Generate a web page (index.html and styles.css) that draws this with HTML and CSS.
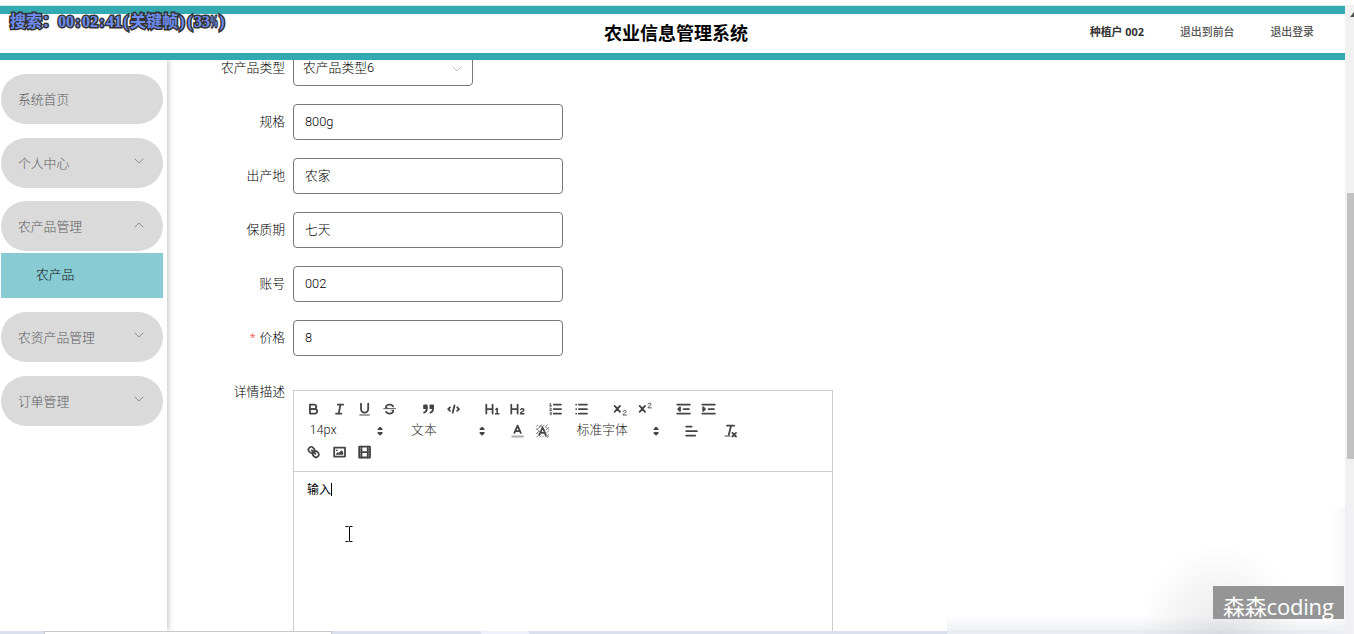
FILE: index.html
```html
<!DOCTYPE html>
<html lang="zh-CN">
<head>
<meta charset="utf-8">
<title>农业信息管理系统</title>
<link rel="stylesheet" href="styles.css">
</head>
<body>
<div class="screen">
  <div class="window">
    <div class="page">
      <header class="header">
        <h1 class="title">农业信息管理系统</h1>
        <nav class="user-nav"><b class="user">种植户 002</b><a>退出到前台</a><a>退出登录</a></nav>
      </header>
      <div class="body">
        <aside class="sidebar">
          <div class="menu-item">系统首页</div>
          <div class="menu-item">个人中心<svg class="chev" viewBox="0 0 10 6"><path d="M.7.7 5 5 9.300.7"/></svg></div>
          <div class="menu-item open">农产品管理<svg class="chev" viewBox="0 0 10 6"><path d="M.7 5.300 5 1 9.300 5.300"/></svg></div>
          <div class="submenu">农产品</div>
          <div class="menu-item">农资产品管理<svg class="chev" viewBox="0 0 10 6"><path d="M.7.7 5 5 9.300.7"/></svg></div>
          <div class="menu-item">订单管理<svg class="chev" viewBox="0 0 10 6"><path d="M.7.7 5 5 9.300.7"/></svg></div>
        </aside>
        <main class="form">
          <div class="row"><label>农产品类型</label><div class="field select">农产品类型6<svg class="chev light" viewBox="0 0 10 6"><path d="M.7.7 5 5 9.300.7"/></svg></div></div>
          <div class="row"><label>规格</label><div class="field">800g</div></div>
          <div class="row"><label>出产地</label><div class="field">农家</div></div>
          <div class="row"><label>保质期</label><div class="field">七天</div></div>
          <div class="row"><label>账号</label><div class="field">002</div></div>
          <div class="row"><label><span class="req">*</span>价格</label><div class="field">8</div></div>
          <div class="row tall"><label>详情描述</label>
            <div class="editor">
              <div class="toolbar">
                <div class="tools">
                  <div class="group">
                    <svg class="ic" viewBox="0 0 18 18"><path class="s" d="M5,4H9.500A2.500,2.500,0,0,1,12,6.500v0A2.500,2.500,0,0,1,9.500,9H5A0,0,0,0,1,5,9V4A0,0,0,0,1,5,4Z"/><path class="s" d="M5,9h5.500A2.500,2.500,0,0,1,13,11.500v0A2.500,2.500,0,0,1,10.500,14H5a0,0,0,0,1,0,0V9A0,0,0,0,1,5,9Z"/></svg>
                    <svg class="ic" viewBox="0 0 18 18"><path class="s" d="M7 4h6M5 14h6M8 14l2-10"/></svg>
                    <svg class="ic" viewBox="0 0 18 18"><path class="s" d="M5,3V9a4.012,4.012,0,0,0,4,4H9a4.012,4.012,0,0,0,4-4V3"/><rect class="f" x="3" y="15" width="12" height="1" rx=".5"/></svg>
                    <svg class="ic" viewBox="0 0 18 18"><path class="s t" d="M15.500 8.500h-13"/><path class="f" d="M9.007,8C6.542,7.791,6,7.519,6,6.500,6,5.792,7.283,5,9,5c1.571,0,2.765.679,2.969,1.309a1,1,0,0,0,1.900-.617C13.356,4.106,11.354,3,9,3,6.200,3,4,4.538,4,6.500a3.200,3.200,0,0,0,.5,1.843Z"/><path class="f" d="M8.984,10C11.457,10.208,12,10.479,12,11.500c0,.708-1.283,1.500-3,1.500-1.571,0-2.765-.679-2.969-1.309a1,1,0,1,0-1.900.617C4.644,13.894,6.646,15,9,15c2.800,0,5-1.538,5-3.500a3.200,3.200,0,0,0-.5-1.843Z"/></svg>
                  </div>
                  <div class="group">
                    <svg class="ic" viewBox="0 0 18 18"><rect class="f s" x="4" y="5" width="3" height="3"/><rect class="f s" x="11" y="5" width="3" height="3"/><path class="f s" d="M7,8c0,4.031-3,5-3,5M14,8c0,4.031-3,5-3,5"/></svg>
                    <svg class="ic" viewBox="0 0 18 18"><path class="s" d="M5 7 3 9l2 2M13 7l2 2-2 2M10 5l-2 8"/></svg>
                  </div>
                  <div class="group">
                    <svg class="ic" viewBox="0 0 18 18"><path class="f" d="M10,4V14a1,1,0,0,1-2,0V10H3v4a1,1,0,0,1-2,0V4A1,1,0,0,1,3,4V8H8V4a1,1,0,0,1,2,0Zm6.068,9.209H14.981V8.244a.6.6,0,0,0-.605-.607h-.627a1.089,1.089,0,0,0-.671.271l-1.066.874a.591.591,0,0,0-.086.860l.314.380a.594.594,0,0,0,.854.060l.184-.13v3.262H12.194a.594.594,0,0,0-.605.606v.508a.6.6,0,0,0,.605.606h3.875a.6.6,0,0,0,.605-.606v-.508A.600.600,0,0,0,16.068,13.209Z"/></svg>
                    <svg class="ic" viewBox="0 0 18 18"><path class="f" d="M16.740,13.819v.521a.583.583,0,0,1-.595.600h-3.967a.606.606,0,0,1-.638-.605v-.316c0-2.061,3.569-2.700,3.569-3.932a.739.739,0,0,0-.813-.683,1.124,1.124,0,0,0-.955.585.566.566,0,0,1-.851.219l-.443-.310a.570.570,0,0,1-.186-.849,2.870,2.870,0,0,1,2.512-1.214c1.240,0,2.300.800,2.300,2.107,0,1.914-2.722,2.500-3.065,3.263h2.536A.589.589,0,0,1,16.740,13.819ZM9,3A1,1,0,0,0,8,4V8H3V4A1,1,0,0,0,1,4V14a1,1,0,0,0,2,0V10H8v4a1,1,0,0,0,2,0V4A1,1,0,0,0,9,3Z"/></svg>
                  </div>
                  <div class="group">
                    <svg class="ic" viewBox="0 0 18 18"><path class="s" d="M7 4h8M7 9h8M7 14h8"/><path class="s t" d="M2.500 5.500h2M3.500 5.500V2.700l-1 .5M4.500 10.500h-2c0-.9 1.900-1 1.900-1.900 0-1.100-1.600-1-1.900-.3M2.500 14.800c.3.900 2 .8 2-.2 0-.6-.4-.8-1-.8.6 0 .9-.3.9-.7 0-.8-1.500-.9-1.900-.2"/></svg>
                    <svg class="ic" viewBox="0 0 18 18"><path class="s" d="M6 4h9M6 9h9M6 14h9M3 4h0M3 9h0M3 14h0"/></svg>
                  </div>
                  <div class="group">
                    <svg class="ic" viewBox="0 0 18 18"><path class="s" d="M3.500 5.500l6 6.500M9.500 5.500l-6 6.500"/><path class="s t" d="M12.800 11.600c.2-1.700 3.400-1.700 3.400.1 0 1.400-3.400 2-3.400 3.900H16.500"/></svg>
                    <svg class="ic" viewBox="0 0 18 18"><path class="s" d="M3.500 5.500l6 6.500M9.500 5.500l-6 6.500"/><path class="s t" d="M12.800 3.600c.2-1.700 3.400-1.700 3.400.1 0 1.400-3.400 2-3.400 3.900H16.500"/></svg>
                  </div>
                  <div class="group">
                    <svg class="ic" viewBox="0 0 18 18"><path class="s" d="M2 14h14M2 4h14M9 9h6"/><path class="s f" d="M5 7v4L3 9z"/></svg>
                    <svg class="ic" viewBox="0 0 18 18"><path class="s" d="M2 14h14M2 4h14M9 9h6"/><path class="s f" d="M3 7v4l2-2z"/></svg>
                  </div>
                </div>
                <div class="tools">
                  <div class="picker">14px<svg class="updown" viewBox="0 0 18 18"><path class="s f" d="M7 11l2 2 2-2zM7 7l2-2 2 2z"/></svg></div>
                  <div class="picker">文本<svg class="updown" viewBox="0 0 18 18"><path class="s f" d="M7 11l2 2 2-2zM7 7l2-2 2 2z"/></svg></div>
                  <div class="group">
                    <svg class="ic" viewBox="0 0 18 18"><path class="s faint" d="M3 15h12"/><path class="s" d="M5.500 11 9 3l3.500 8M11.630 9H6.380"/></svg>
                    <svg class="ic" viewBox="0 0 18 18"><path class="hatch" d="M2 4l2-2M2 8l6-6M2 12 5 9M2 16l3-3M5 5l3-3M9 4l2-2M11.500 5l3-3M12.500 8l3.500-3.500M13.500 11 16 8.500M14 14.500l2-2M5.500 16 7.500 14M8.500 16l2-2M11.500 16l2-2M14.500 16l1.500-1.500M12.500 4 16 7.500M2 6l4 4M3 11l3 3M6 3l3 2M11 13l4 3"/><path class="s" d="M5.500 13 9 5l3.500 8M11.630 11H6.380"/></svg>
                  </div>
                  <div class="picker wide">标准字体<svg class="updown" viewBox="0 0 18 18"><path class="s f" d="M7 11l2 2 2-2zM7 7l2-2 2 2z"/></svg></div>
                  <div class="group"><svg class="ic" viewBox="0 0 18 18"><path class="s" d="M3 9h12M3 14h10M3 4h6"/></svg></div>
                  <div class="group"><svg class="ic" viewBox="0 0 18 18"><path class="s" d="M5 3h8M9.500 3 7 13M11 11l4 4M15 11l-4 4"/><rect class="f" x="2" y="14" width="7" height="1" rx=".5"/></svg></div>
                </div>
                <div class="tools">
                  <div class="group">
                    <svg class="ic" viewBox="0 0 18 18"><path class="s" d="M7 7l4 4M8.900,4.577a3.476,3.476,0,0,1,.360,4.679A3.476,3.476,0,0,1,4.577,8.900C3.185,7.500,2.035,6.400,4.217,4.217S7.500,3.185,8.900,4.577ZM13.423,9.100a3.476,3.476,0,0,0-4.679-.360,3.476,3.476,0,0,0,.360,4.679c1.392,1.392,2.500,2.542,4.679.360S14.815,10.500,13.423,9.100Z"/></svg>
                    <svg class="ic" viewBox="0 0 18 18"><rect class="s" x="3" y="4" width="12" height="10"/><circle class="f" cx="6" cy="7" r="1"/><path class="f" d="M5 12v-1l2-2 1 1 3-3 2 2v3z"/></svg>
                    <svg class="ic" viewBox="0 0 18 18"><rect class="s" x="3" y="3" width="12" height="12"/><path class="s" d="M5.500 3v12M12.500 3v12M5 9h8"/><path class="s t" d="M3 6h2M3 9h2M3 12h2M13 6h2M13 9h2M13 12h2"/></svg>
                  </div>
                </div>
              </div>
              <div class="content">输入<span class="caret"></span></div>
            </div>
          </div>
        </main>
      </div>
    </div>
    <div class="scrollbar"><i class="up"></i><i class="thumb"></i></div>
  </div>
  <footer class="taskbar"><i class="tab"></i><i class="tab2"></i></footer>
  <div class="fog"></div>
  <div class="glow"></div>
  <div class="edge"></div>
  <div class="watermark">森森coding</div>
  <svg class="cursor" viewBox="0 0 8 16"><path d="M.5 .5h3M4.500 .5h3M4.500 1v14M.5 15.500h3M4.500 15.500h3"/></svg>
  <div class="osd">搜索：00<i>:</i>02<i>:</i>41<i>(</i>关键帧<i>)</i><i>(</i>33<i class="pct">%</i><i>)</i></div>
</div>
</body>
</html>
```
FILE: styles.css
```css
* { box-sizing: border-box; }
body { margin: 0; background: #fff; font-family: Roboto, "Noto Sans CJK SC", sans-serif; font-size: 12.8px; color: #202124; }
svg { display: block; fill: none; }
.screen { position: relative; width: 1354px; height: 634px; overflow: hidden; display: flex; flex-direction: column; }
.window { height: 631px; display: flex; padding-top: 5px; }
.page { width: 1345px; display: flex; flex-direction: column; border-top: 1px solid #d9eeee; }
.header { flex: none; height: 54px; border-top: 8px solid #33a9b1; border-bottom: 7px solid #33a9b1; display: grid; grid-template-columns: 1fr auto 1fr; align-items: center; padding: 0 31px 0 38px; }
.title { grid-column: 2; margin: 0; font-size: 18px; line-height: 36px; color: #000; font-weight: 700; }
.user-nav { display: flex; justify-content: flex-end; gap: 36px; font: 10.9px/36px "Open Sans", "Noto Sans CJK SC", sans-serif; color: #555; font-weight: 500; padding-bottom: 3px; }
.user { color: #333; }
.body { flex: 1; min-height: 0; display: flex; overflow: hidden; }
.sidebar { flex: none; width: 167px; padding: 14px 4px 0 1px; box-shadow: 1px 0 6px rgba(0,0,0,.26); color: #5c5c60; font-weight: 300; }
.menu-item { height: 50px; margin-bottom: 13.7px; border-radius: 25px; background: #dadada; padding: 0 19px 1px 17px; display: flex; align-items: center; justify-content: space-between; }
.menu-item.open { margin-bottom: 1.500px; }
.submenu { height: 45px; margin-bottom: 14px; background: #88cbd2; color: #0c1214; line-height: 44px; padding-left: 35px; }
.chev { width: 10px; height: 6px; stroke: #88888c; stroke-width: .9; margin-top: -2px; }
.chev.light { stroke: #b4b8c0; margin: 2px 0 0; }
.form { padding-left: 26px; margin-top: -10px; }
.row { display: flex; margin-bottom: 18px; }
.row label { width: 92px; text-align: right; line-height: 36px; font-weight: 300; color: #000; }
.req { color: #f04848; margin-right: 4px; }
.field { width: 270px; height: 36px; margin-left: 8px; border: 1px solid #77787c; border-radius: 4px; padding: 0 11px; line-height: 34px; font-weight: 300; color: #000; }
.select { width: 180px; padding: 0 10px 0 9px; display: flex; justify-content: space-between; align-items: center; }
.tall { padding-top: 16px; }
.tall label { margin-top: -16px; }
.editor { width: 540px; height: 300px; margin-left: 8px; border: 1px solid #ccc; }
.toolbar { height: 81px; padding: 7.500px 7.400px; border-bottom: 1px solid #ccc; color: #222; }
.tools { display: flex; height: 21.6px; gap: 13.5px; align-items: center; }
.group { display: flex; }
.ic { width: 25.2px; height: 16.2px; }
.s { stroke: #444; stroke-width: 2; stroke-linecap: round; stroke-linejoin: round; }
.f { fill: #444; }
.t { stroke-width: 1; }
.faint { stroke: #aaa; }
.hatch { stroke-width: .9; stroke: #666; }
.picker { width: 88.2px; padding: 0 1.500px 2px 8px; display: flex; justify-content: space-between; align-items: center; line-height: 19px; font-weight: 300; }
.picker.wide { width: 97.2px; }
.updown { width: 16.2px; height: 16.2px; margin-top: 3px; }
.updown .s { stroke-width: 1.8; }
.content { padding: 9px 13px; font-size: 12px; line-height: 18px; color: #000; display: flex; }
.caret { width: 1px; height: 13px; margin-top: 2px; background: #000; }
.scrollbar { width: 9px; background: #f1f1f1; padding-left: 2px; }
.up { display: block; width: 0; border: 4px solid transparent; border-top-width: 0; border-bottom: 5px solid #505050; margin: 7px 0 176px 3px; }
.thumb { display: block; height: 266px; background: #c1c1c1; }
.taskbar { height: 3px; display: flex; background: #dbe0ef; padding-left: 44px; }
.tab { width: 288px; background: #fff; border: 1px solid #c8c8cc; border-bottom: 0; }
.tab2 { width: 48px; margin-left: 149px; background: #f0f2fb; }
.fog { position: absolute; left: 947px; right: 0; bottom: 0; height: 18px; background: linear-gradient(rgba(255,255,255,0), #eaecf3); }
.glow { position: absolute; left: 1130px; top: 545px; width: 180px; height: 89px; background: radial-gradient(ellipse 82px 90px at 50% 100%, rgba(150,150,155,.2), rgba(180,180,180,.12) 60%, transparent); }
.edge { position: absolute; right: 0; top: 507px; width: 22px; height: 127px; background: linear-gradient(90deg, rgba(255,255,255,0), #f1f1f3); }
.watermark { position: absolute; left: 1213px; top: 586px; width: 131px; height: 33px; background: #959595; color: #fff; font: 22px/30px "Open Sans", "Noto Sans CJK SC", sans-serif; padding: 5px 0 0 10px; white-space: nowrap; letter-spacing: -.2px; }
.cursor { position: absolute; left: 345px; top: 526px; width: 8px; height: 16px; stroke: #000; stroke-width: 1; }
.osd { position: absolute; left: 10px; top: 11px; display: flex; font: bold 16px/21px "Liberation Serif", "Noto Sans CJK SC", serif; color: #6c8cf0; -webkit-text-stroke: 3px #333; paint-order: stroke fill; white-space: nowrap; }
.osd i { display: inline-block; width: 8px; text-align: center; font-style: normal; }
.osd .pct { display: block; transform: scaleX(.5); transform-origin: 0 50%; }
```
